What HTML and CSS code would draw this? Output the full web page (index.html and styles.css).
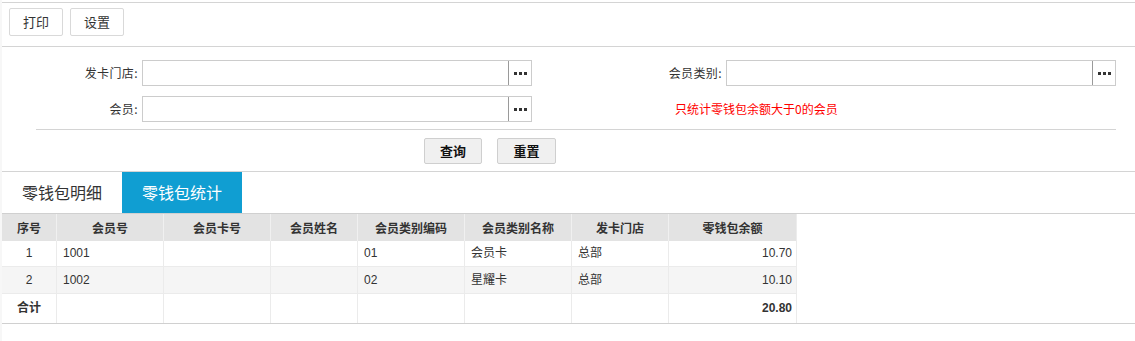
FILE: index.html
```html
<!DOCTYPE html>
<html lang="zh-CN">
<head>
<meta charset="utf-8">
<title>零钱包统计</title>
<link rel="stylesheet" href="styles.css">
</head>
<body>
<div class="page">
  <div class="toolbar">
    <button class="btn">打印</button>
    <button class="btn">设置</button>
  </div>
  <div class="search">
    <div class="form">
      <label class="lbl">发卡门店:</label>
      <div class="picker"><span class="field"></span><span class="more"><i></i><i></i><i></i></span></div>
      <label class="lbl">会员类别:</label>
      <div class="picker"><span class="field"></span><span class="more"><i></i><i></i><i></i></span></div>
      <label class="lbl">会员:</label>
      <div class="picker"><span class="field"></span><span class="more"><i></i><i></i><i></i></span></div>
      <div class="hint">只统计零钱包余额大于0的会员</div>
    </div>
    <div class="actions">
      <button class="btn2">查询</button>
      <button class="btn2 wide">重置</button>
    </div>
  </div>
  <div class="tabs">
    <div class="tab">零钱包明细</div>
    <div class="tab active">零钱包统计</div>
  </div>
  <div class="grid-wrap">
    <table class="grid">
      <colgroup>
        <col class="c-idx"><col class="c-w107"><col class="c-w107"><col class="c-w87"><col class="c-w107"><col class="c-w107"><col class="c-w97"><col class="c-w128">
      </colgroup>
      <thead>
        <tr><th>序号</th><th>会员号</th><th>会员卡号</th><th>会员姓名</th><th>会员类别编码</th><th>会员类别名称</th><th>发卡门店</th><th>零钱包余额</th></tr>
      </thead>
      <tbody>
        <tr class="r1"><td class="ctr">1</td><td>1001</td><td></td><td></td><td>01</td><td>会员卡</td><td>总部</td><td class="num">10.70</td></tr>
        <tr class="r2"><td class="ctr">2</td><td>1002</td><td></td><td></td><td>02</td><td>星耀卡</td><td>总部</td><td class="num">10.10</td></tr>
        <tr class="sum"><td class="ctr">合计</td><td></td><td></td><td></td><td></td><td></td><td></td><td class="num">20.80</td></tr>
      </tbody>
    </table>
  </div>
</div>
</body>
</html>
```
FILE: styles.css
```css
html { background: #f7f7f7; }
body {
  margin: 0;
  font-family: "Liberation Sans", "Noto Sans CJK SC", sans-serif;
  font-size: 12px;
  color: #333;
}
.page {
  margin-left: 2px;
  padding-top: 2px;
  background: #fff;
  min-height: calc(100vh - 2px);
}
.toolbar {
  display: flex;
  gap: 7px;
  align-items: flex-start;
  height: 38px;
  padding: 5px 0 0 7px;
  border-top: 1px solid #d4d4d4;
  border-bottom: 1px solid #d4d4d4;
}
.btn {
  width: 54px;
  height: 28px;
  padding: 0;
  background: #fff;
  border: 1px solid #d9d9d9;
  border-radius: 2px;
  font-family: "Noto Sans CJK SC", sans-serif;
  font-size: 13px;
  color: #333;
  line-height: 26px;
}
.search { border-bottom: 1px solid #d4d4d4; }
.form {
  display: grid;
  grid-template-columns: 102px 390px 186px 390px;
  grid-auto-rows: 26px;
  column-gap: 4px;
  row-gap: 10px;
  width: 1080px;
  margin-left: 34px;
  padding: 13px 0 7px;
  border-bottom: 1px solid #d4d4d4;
}
.lbl {
  align-self: center;
  text-align: right;
  font-family: "Noto Sans CJK SC", sans-serif;
  font-size: 12px;
  line-height: 16px;
  letter-spacing: 0.4px;
  color: #333;
}
.picker {
  display: flex;
  border: 1px solid #cccccc;
  background: #fff;
}
.field { flex: 1; }
.more {
  width: 22px;
  border-left: 1px solid #9a9a9a;
  display: flex;
  align-items: center;
  justify-content: center;
  gap: 2px;
}
.more i {
  display: block;
  width: 3px;
  height: 3px;
  background: #333;
}
.hint {
  grid-column: 3 / 5;
  align-self: center;
  padding-left: 139px;
  color: #ff0000;
  font-family: "Noto Sans CJK SC", sans-serif;
  font-size: 12px;
  line-height: 16px;
}
.actions {
  display: flex;
  gap: 15px;
  padding: 8px 0 7px 422px;
}
.btn2 {
  width: 58px;
  height: 26px;
  padding: 0;
  background: #f0f0f0;
  border: 1px solid #cfcfcf;
  border-radius: 2px;
  font-family: "Noto Sans CJK SC", sans-serif;
  font-size: 13px;
  font-weight: bold;
  color: #111;
  line-height: 24px;
}
.btn2.wide { width: 59px; }
.tabs {
  display: flex;
  height: 41px;
}
.tab {
  width: 120px;
  text-align: center;
  line-height: 41px;
  font-family: "Noto Sans CJK SC", sans-serif;
  font-size: 16px;
  color: #333;
}
.tab.active {
  background: #109ed2;
  color: #fff;
}
.grid-wrap {
  border-top: 1px solid #d0d0d0;
  border-bottom: 1px solid #d0d0d0;
}
.grid {
  border-collapse: separate;
  border-spacing: 0;
  table-layout: fixed;
  width: 795px;
}
.c-idx { width: 55px; }
.c-w107 { width: 107px; }
.c-w87 { width: 87px; }
.c-w97 { width: 97px; }
.c-w128 { width: 128px; }
.grid th {
  background: #e3e3e3;
  border-right: 1px solid #f0f0f0;
  font-family: "Noto Sans CJK SC", sans-serif;
  font-weight: bold;
  font-size: 12px;
  line-height: 27px;
  padding: 0;
  color: #333;
  text-align: center;
}
.grid th:last-child { border-right: 1px solid #ececec; }
.grid td {
  border-right: 1px solid #ebebeb;
  padding: 0 6px;
  white-space: nowrap;
  overflow: hidden;
  color: #333;
}
.grid .r1 td { line-height: 25px; border-bottom: 1px solid #ebebeb; }
.grid .r2 td { line-height: 26px; border-bottom: 1px solid #ebebeb; background: #f5f5f5; }
.grid .sum td { line-height: 29px; font-weight: bold; }
.grid td.ctr { text-align: center; padding: 0; }
.grid td.num { text-align: right; padding: 0 4px 0 0; }
```
